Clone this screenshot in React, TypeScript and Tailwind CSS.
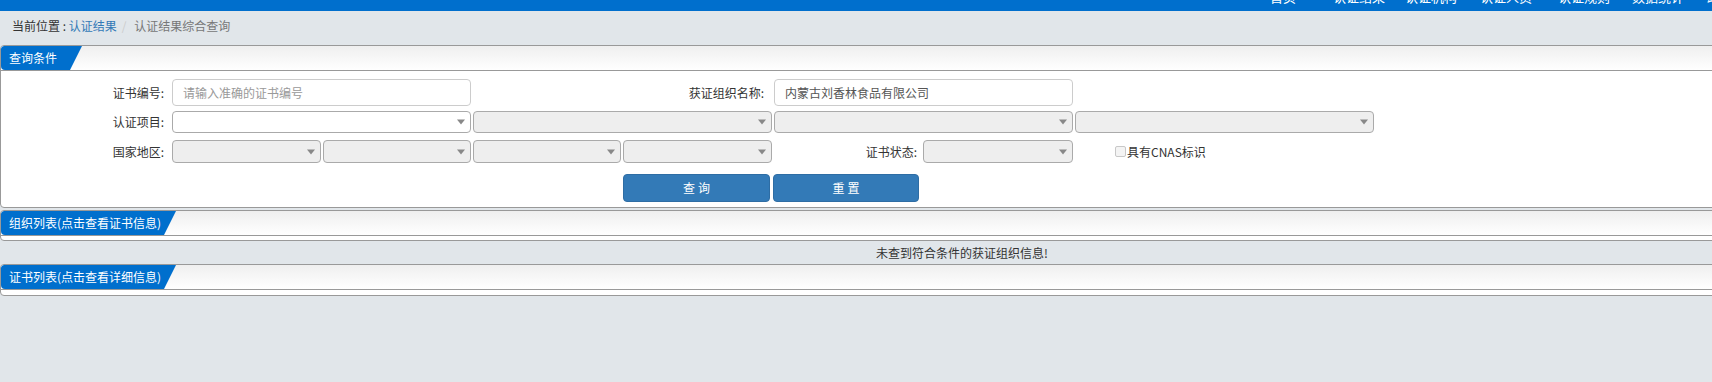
import React from "react";

const NAV = [
  { t: "首页", w: "w-[63px]" },
  { t: "认证结果", w: "w-[72px]" },
  { t: "认证机构", w: "w-[75px]" },
  { t: "认证人员", w: "w-[78px]" },
  { t: "认证规则", w: "w-[74px]" },
  { t: "数据统计", w: "w-[75px]" },
  { t: "政策法规", w: "w-[75px]" },
];

function Arrow() {
  return (
    <span className="absolute right-[5px] top-1/2 -translate-y-1/2 h-0 w-0 border-l-[4px] border-r-[4px] border-t-[5px] border-l-transparent border-r-transparent border-t-[#888]" />
  );
}

function Select({ w, h, white }: { w: string; h: string; white?: boolean }) {
  return (
    <div
      className={`relative ${w} ${h} shrink-0 rounded-[4px] border border-[#aaa] ${
        white ? "bg-white" : "bg-[#eee]"
      }`}
    >
      <Arrow />
    </div>
  );
}

function PanelHeader({ title, w }: { title: string; w: string }) {
  return (
    <div className="flex h-[25px] border-b border-[#999] bg-linear-to-b from-[#efefef] to-white">
      <div
        className={`${w} flex h-full items-center rounded-tl-[3px] rounded-bl-[4px] bg-[#006fcd] pl-[8px] text-[12px] text-white [clip-path:polygon(0_0,100%_0,calc(100%-12px)_100%,0_100%)]`}
      >
        {title}
      </div>
    </div>
  );
}

export default function App() {
  return (
    <div className="h-[382px] w-[1712px] overflow-hidden bg-[#e1e6ea] font-['Noto_Sans_CJK_SC','Noto_Sans',sans-serif] text-[12px] text-[#333]">
      <div className="w-[1924px]">
        {/* top bar */}
        <div className="h-[11px] overflow-hidden bg-[#006fcd]">
          <div className="-mt-[10px] flex pl-[1270px] text-[13px] leading-[13px] text-white">
            {NAV.map((n) => (
              <span key={n.t} className={`${n.w} shrink-0`}>
                {n.t}
              </span>
            ))}
          </div>
        </div>

        {/* breadcrumb */}
        <div className="flex h-[34px] pl-[12px] pt-[6px] leading-[18px]">
          <span className="text-[#333]">当前位置 :&nbsp;</span>
          <span className="text-[#337ab7]">认证结果</span>
          <span className="px-[5px] text-[#ccc]">/&nbsp;</span>
          <span className="text-[#777]">认证结果综合查询</span>
        </div>

        {/* panel 1 */}
        <div className="overflow-hidden rounded-[4px] border border-[#999] bg-white">
          <PanelHeader title="查询条件" w="w-[81px]" />
          <div className="flex flex-col pt-[8px] pb-[5px]">
            <div className="flex h-[27px] items-center">
              <div className="w-[163px] text-right">证书编号:</div>
              <input
                readOnly
                placeholder="请输入准确的证书编号"
                className="ml-[8px] h-[27px] w-[299px] rounded-[4px] border border-[#ccc] px-[10px] text-[12px] text-[#555] outline-none placeholder:text-[#999]"
              />
              <div className="w-[293px] text-right">获证组织名称:</div>
              <input
                readOnly
                value="内蒙古刘香林食品有限公司"
                className="ml-[10px] h-[27px] w-[299px] rounded-[4px] border border-[#ccc] px-[10px] text-[12px] text-[#555] outline-none"
              />
            </div>
            <div className="mt-[5px] flex h-[22px] items-center">
              <div className="w-[163px] text-right">认证项目:</div>
              <div className="ml-[8px] flex gap-[2px]">
                <Select w="w-[299px]" h="h-[22px]" white />
                <Select w="w-[299px]" h="h-[22px]" />
                <Select w="w-[299px]" h="h-[22px]" />
                <Select w="w-[299px]" h="h-[22px]" />
              </div>
            </div>
            <div className="mt-[7px] flex h-[23px] items-center">
              <div className="w-[163px] text-right">国家地区:</div>
              <div className="ml-[8px] flex gap-[2px]">
                <Select w="w-[149px]" h="h-[23px]" />
                <Select w="w-[148px]" h="h-[23px]" />
                <Select w="w-[148px]" h="h-[23px]" />
                <Select w="w-[149px]" h="h-[23px]" />
              </div>
              <div className="w-[145px] text-right">证书状态:</div>
              <div className="ml-[6px]">
                <Select w="w-[150px]" h="h-[23px]" />
              </div>
              <div className="ml-[42px] flex items-center">
                <span className="h-[11px] w-[11px] rounded-[2px] border border-[#c8c8c8] bg-[#f4f4f4]" />
                <span className="ml-[1px]">具有CNAS标识</span>
              </div>
            </div>
            <div className="mt-[11px] flex h-[28px] gap-[3px] pl-[622px]">
              <button className="h-[28px] w-[147px] rounded-[4px] border border-[#2e6da4] bg-[#337ab7] pl-[3px] text-[12px] tracking-[3px] text-white">
                查询
              </button>
              <button className="h-[28px] w-[146px] rounded-[4px] border border-[#2e6da4] bg-[#337ab7] pl-[3px] text-[12px] tracking-[3px] text-white">
                重置
              </button>
            </div>
          </div>
        </div>

        {/* panel 2 */}
        <div className="mt-[2px] overflow-hidden rounded-[4px] border border-[#999] bg-white">
          <PanelHeader title="组织列表(点击查看证书信息)" w="w-[175px]" />
          <div className="h-[4px]" />
        </div>

        <div className="flex h-[23px] items-center justify-center text-[#333]">
          未查到符合条件的获证组织信息!
        </div>

        {/* panel 3 */}
        <div className="overflow-hidden rounded-[4px] border border-[#999] bg-white">
          <PanelHeader title="证书列表(点击查看详细信息)" w="w-[175px]" />
          <div className="h-[5px]" />
        </div>
      </div>
    </div>
  );
}
